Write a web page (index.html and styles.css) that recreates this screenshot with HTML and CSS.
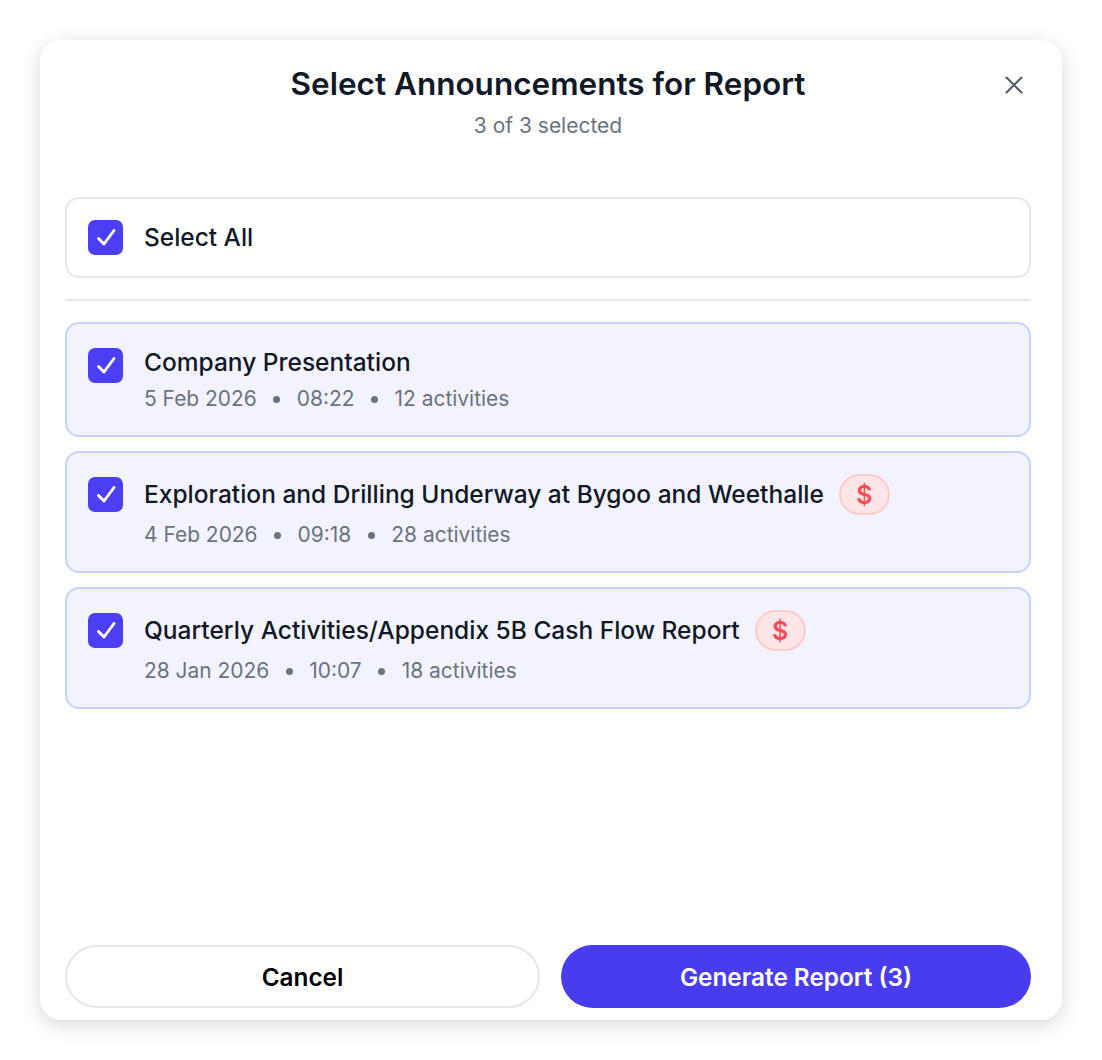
FILE: index.html
```html
<!DOCTYPE html>
<html lang="en">
<head>
<meta charset="utf-8">
<title>Select Announcements for Report</title>
<link rel="stylesheet" href="styles.css">
</head>
<body>
<div class="modal">
  <header class="head">
    <h1 class="title">Select Announcements for Report</h1>
    <p class="sub">3 of 3 selected</p>
    <button class="close" aria-label="Close"><svg width="20" height="20" viewBox="0 0 20 20"><path d="M2.5 2.5L17.5 17.5M17.5 2.5L2.5 17.5" fill="none" stroke="#555b66" stroke-width="2.1" stroke-linecap="round"/></svg></button>
  </header>
  <div class="all">
    <span class="check"><svg width="35" height="35" viewBox="0 0 35 35"><path d="M10.5 18.5L16 24L26 10.5" fill="none" stroke="#fff" stroke-width="2.9" stroke-linecap="round" stroke-linejoin="round"/></svg></span>
    <span class="all-label">Select All</span>
  </div>
  <div class="divider"></div>
  <div class="list">
    <div class="card c1">
      <span class="check"><svg width="35" height="35" viewBox="0 0 35 35"><path d="M10.5 18.5L16 24L26 10.5" fill="none" stroke="#fff" stroke-width="2.9" stroke-linecap="round" stroke-linejoin="round"/></svg></span>
      <div class="body">
        <div class="name"><span class="name-text">Company Presentation</span></div>
        <div class="meta"><span>5 Feb 2026</span><i class="dot"></i><span>08:22</span><i class="dot"></i><span>12 activities</span></div>
      </div>
    </div>
    <div class="card c2">
      <span class="check"><svg width="35" height="35" viewBox="0 0 35 35"><path d="M10.5 18.5L16 24L26 10.5" fill="none" stroke="#fff" stroke-width="2.9" stroke-linecap="round" stroke-linejoin="round"/></svg></span>
      <div class="body">
        <div class="name"><span class="name-text">Exploration and Drilling Underway at Bygoo and Weethalle</span><span class="badge">$</span></div>
        <div class="meta"><span>4 Feb 2026</span><i class="dot"></i><span>09:18</span><i class="dot"></i><span>28 activities</span></div>
      </div>
    </div>
    <div class="card c2">
      <span class="check"><svg width="35" height="35" viewBox="0 0 35 35"><path d="M10.5 18.5L16 24L26 10.5" fill="none" stroke="#fff" stroke-width="2.9" stroke-linecap="round" stroke-linejoin="round"/></svg></span>
      <div class="body">
        <div class="name"><span class="name-text">Quarterly Activities/Appendix 5B Cash Flow Report</span><span class="badge">$</span></div>
        <div class="meta"><span>28 Jan 2026</span><i class="dot"></i><span>10:07</span><i class="dot"></i><span>18 activities</span></div>
      </div>
    </div>
  </div>
  <footer class="foot">
    <button class="btn cancel">Cancel</button>
    <button class="btn primary">Generate Report (3)</button>
  </footer>
</div>
</body>
</html>
```
FILE: styles.css
```css
* { box-sizing: border-box; }
html, body { margin: 0; height: 100%; background: #fff; }
body { padding: 40px; font-family: Inter, "Liberation Sans", sans-serif; }
.modal {
  position: relative;
  width: 1022px;
  height: 980px;
  background: #fff;
  border-radius: 21px;
  box-shadow: 0 5px 20px rgba(0,0,0,.16);
  padding: 0 31px 12px 25px;
  display: flex;
  flex-direction: column;
}
.head { height: 157px; padding-top: 25px; text-align: center; }
.title { margin: 0; font-size: 31.5px; line-height: 38px; font-weight: 600; color: #111827; }
.sub { margin: 10px 0 0; font-size: 21px; line-height: 26px; color: #6b7280; }
.close { position: absolute; top: 35px; right: 38px; width: 20px; height: 20px; padding: 0; border: 0; background: none; display: block; }
.close svg { display: block; }
.all {
  height: 81px;
  border: 2px solid #e5e7eb;
  border-radius: 14px;
  padding: 0 21px;
  display: flex;
  align-items: center;
  gap: 21px;
}
.all-label { font-size: 24.45px; font-weight: 500; color: #111827; padding-bottom: 2px; }
.check { flex: none; width: 35px; height: 35px; background: #4b3ef5; border-radius: 7px; display: block; }
.check svg { display: block; }
.divider { height: 2px; background: #e5e7eb; margin: 21px 0; }
.list { display: flex; flex-direction: column; gap: 14px; flex: 1; }
.card {
  background: #f3f3ff;
  border: 2px solid #c7d2fe;
  border-radius: 14px;
  padding: 0 21px;
  display: flex;
  gap: 21px;
  align-items: flex-start;
}
.c1 { height: 115px; padding-top: 24px; }
.c2 { height: 122px; padding-top: 21px; }
.c2 .check { margin-top: 3px; }
.body { min-width: 0; }
.name { display: flex; align-items: center; gap: 15px; min-height: 30px; font-size: 24.5px; line-height: 30px; font-weight: 500; color: #111827; }
.name-text { margin-top: -2px; }
.c2 .name { height: 41px; }
.meta { display: flex; align-items: center; gap: 16.5px; font-size: 20.95px; line-height: 26px; color: #6b7280; margin-top: 8px; }
.c2 .meta { margin-top: 7px; }
.dot { width: 7px; height: 7px; border-radius: 50%; background: #6b7280; }
.badge {
  width: 51px;
  height: 41px;
  border: 2px solid #fecaca;
  background: #fee6e8;
  border-radius: 21px;
  color: #fb4b55;
  font-size: 25px;
  font-weight: 600;
  display: flex;
  align-items: center;
  justify-content: center;
}
.foot { display: flex; gap: 21px; height: 63px; }
.btn { border-radius: 32px; height: 63px; font: 600 24.3px Inter, "Liberation Sans", sans-serif; padding: 1px 0 0; }
.cancel { width: 475px; background: #fff; border: 2px solid #e5e7eb; color: #000; }
.primary { width: 470px; background: #483cee; border: 0; color: #fff; }
```
